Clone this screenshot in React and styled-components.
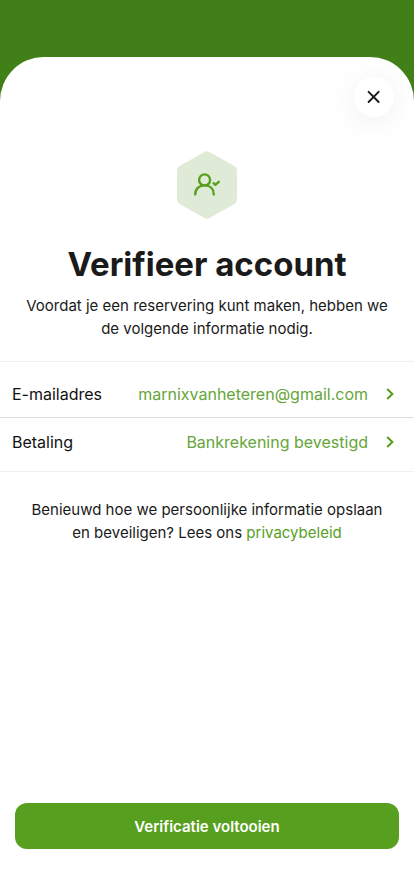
import React from 'react'
import styled, { createGlobalStyle } from 'styled-components'

const steps = [
  { label: 'E-mailadres', value: 'marnixvanheteren@gmail.com' },
  { label: 'Betaling', value: 'Bankrekening bevestigd' },
]

const App = () => {
  return (
    <>
      <GlobalStyle />
      <Screen>
        <Sheet>
          <Header>
            <CloseButton type='button' aria-label='Sluiten'>
              <svg width='14' height='14' viewBox='0 0 14 14' fill='none'>
                <path
                  d='M1.6 1.8 11.6 12M11.6 1.8 1.6 12'
                  stroke='currentColor'
                  strokeWidth='1.9'
                  strokeLinecap='round'
                />
              </svg>
            </CloseButton>
          </Header>
          <Intro>
            <VerifyBadge />
            <Title>Verifieer account</Title>
            <Parag>
              Voordat je een reservering kunt maken, hebben we de volgende
              informatie nodig.
            </Parag>
          </Intro>
          <List>
            {steps.map((el) => {
              return (
                <Item key={el.label}>
                  <Row type='button'>
                    <Label>{el.label}</Label>
                    <Value>{el.value}</Value>
                    <Chevron />
                  </Row>
                </Item>
              )
            })}
          </List>
          <Note>
            Benieuwd hoe we persoonlijke informatie opslaan en beveiligen? Lees
            ons <Link href='#privacybeleid'>privacybeleid</Link>
          </Note>
          <Footer>
            <SubmitButton type='button'>Verificatie voltooien</SubmitButton>
          </Footer>
        </Sheet>
      </Screen>
    </>
  )
}

const VerifyBadge = () => (
  <svg width='60' height='68' viewBox='0 0 60 68' fill='none' aria-hidden='true'>
    <path
      d='M27 1.2Q30 -.5 33 1.2L57 14.8Q60 16.5 60 20V48Q60 51.5 57 53.2L33 66.8Q30 68.5 27 66.8L3 53.2Q0 51.5 0 48V20Q0 16.5 3 14.8Z'
      fill='#e0ebd7'
    />
    <g stroke='#56a01e' strokeWidth='2.4' strokeLinecap='round' strokeLinejoin='round'>
      <circle cx='27.6' cy='28.9' r='5.5' />
      <path d='M18.2 43.4C18.2 38 22 34.4 27.6 34.4S36.8 38 36.8 43.4' />
      <path d='M36.6 32.2 38.3 33.8 41.8 30.8' />
    </g>
  </svg>
)

const Chevron = () => (
  <svg width='8' height='12' viewBox='0 0 8 12' fill='none' aria-hidden='true'>
    <path d='M1.2 1 6.4 6 1.2 11' stroke='#56a01e' strokeWidth='2' />
  </svg>
)

export default App

const GlobalStyle = createGlobalStyle`
  *, *::before, *::after {
    box-sizing: border-box;
  }

  body {
    margin: 0;
    color: #1a1a1a;
    background: #417f19;
    font-family: Inter, 'Liberation Sans', sans-serif;
  }

  button {
    font-family: inherit;
    cursor: pointer;
  }
`

const Screen = styled.div`
  display: flex;
  min-height: 100vh;
  padding-top: 57px;
  flex-direction: column;
`

const Sheet = styled.main`
  flex: 1;
  display: flex;
  background: #fff;
  flex-direction: column;
  border-radius: 44px 44px 0 0;
`

const Header = styled.header`
  display: flex;
  padding: 20px 20px 0;
  justify-content: flex-end;
`

const CloseButton = styled.button`
  width: 40px;
  height: 40px;
  padding: 0;
  border: none;
  display: flex;
  color: #1a1a1a;
  background: #fff;
  border-radius: 50%;
  align-items: center;
  justify-content: center;
  box-shadow: 0 4px 32px rgba(0, 0, 0, 0.07);
`

const Intro = styled.section`
  display: flex;
  text-align: center;
  align-items: center;
  flex-direction: column;
  padding: 34px 16px 21px;
`

const Title = styled.h1`
  font-size: 33px;
  font-weight: 700;
  line-height: 40px;
  margin: 25px 0 10px;
`

const Parag = styled.p`
  margin: 0;
  font-size: 15px;
  line-height: 23px;
`

const List = styled.ul`
  margin: 0;
  list-style: none;
  padding: 8px 0 6px;
  border-top: 1px solid #efefef;
  border-bottom: 1px solid #f0f0f0;
`

const Item = styled.li`
  & + & {
    border-top: 1px solid #dedede;
  }
`

const Row = styled.button`
  width: 100%;
  height: 47px;
  border: none;
  display: flex;
  font-size: 16px;
  background: none;
  padding: 0 20px 0 12px;
  align-items: center;
`

const Label = styled.span`
  color: #111;
`

const Value = styled.span`
  color: #66a53a;
  margin-left: auto;
  margin-right: 18px;
`

const Note = styled.p`
  margin: 0;
  font-size: 15px;
  line-height: 23px;
  text-align: center;
  padding: 26px 24px;
`

const Link = styled.a`
  color: #56a01e;
  text-decoration: none;
`

const Footer = styled.footer`
  margin-top: auto;
  padding: 0 15px 47px;
`

const SubmitButton = styled.button`
  width: 100%;
  height: 46px;
  border: none;
  color: #fff;
  font-size: 15px;
  font-weight: 600;
  background: #579f1f;
  border-radius: 12px;
`
